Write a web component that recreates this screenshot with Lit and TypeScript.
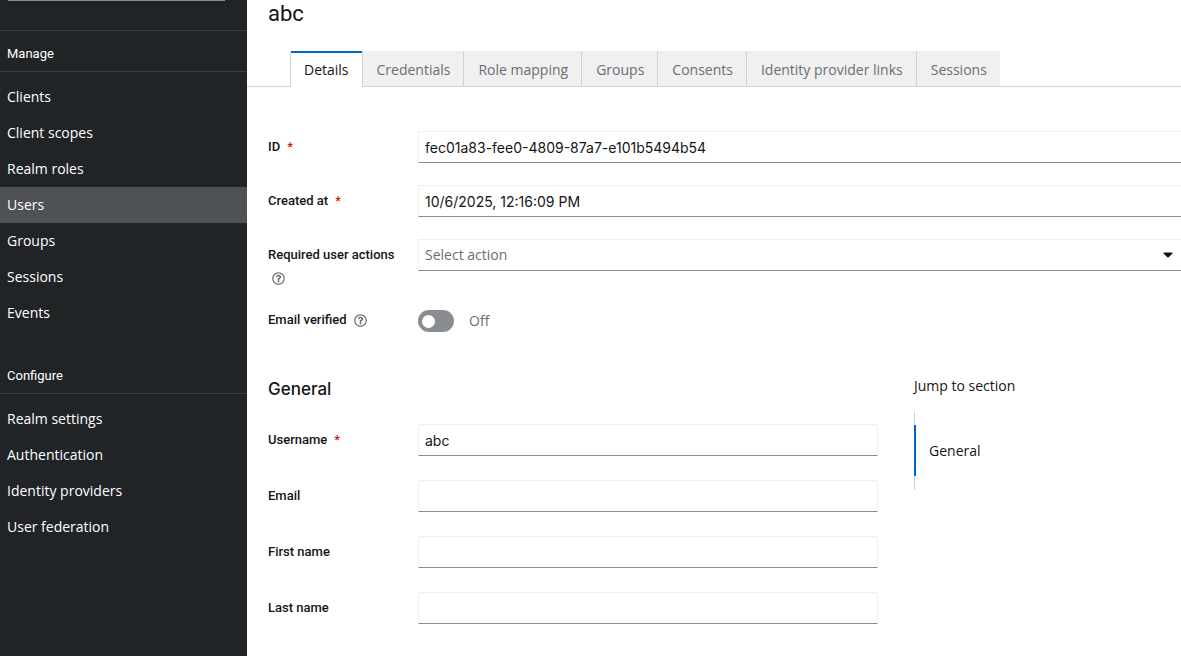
import { LitElement, html, css, nothing } from "lit";
import { customElement } from "lit/decorators.js";
import { classMap } from "lit/directives/class-map.js";

const MANAGE = ["Clients", "Client scopes", "Realm roles", "Users", "Groups", "Sessions", "Events"];
const CONFIGURE = ["Realm settings", "Authentication", "Identity providers", "User federation"];
const TABS = ["Details", "Credentials", "Role mapping", "Groups", "Consents", "Identity provider links", "Sessions"];

const helpIcon = html`<svg viewBox="0 0 512 512" width="13" height="13" aria-hidden="true">
  <path fill="currentColor" d="M256 8C119 8 8 119.100 8 256c0 137 111 248 248 248s248-111 248-248C504 119.100 393 8 256 8zm0 448c-110.500 0-200-89.400-200-200 0-110.500 89.500-200 200-200 110.500 0 200 89.500 200 200 0 110.500-89.400 200-200 200zm107.200-255.200c0 67.100-72.400 68.100-72.400 92.900V300c0 6.600-5.400 12-12 12h-45.600c-6.600 0-12-5.400-12-12v-8.700c0-35.700 27.100-50 47.600-61.500 17.600-9.800 28.300-16.500 28.300-29.600 0-17.200-22-28.700-39.800-28.700-23.200 0-33.900 11-49 30-4.100 5.100-11.500 6.100-16.700 2.100l-27.800-21.100c-5.100-3.900-6.300-11.100-2.600-16.400C184.800 131.500 214.900 112 261.800 112c49.100 0 101.500 38.300 101.500 88.800zM298 368c0 23.200-18.800 42-42 42s-42-18.800-42-42 18.800-42 42-42 42 18.800 42 42z"/>
</svg>`;

@customElement("side-nav")
class SideNav extends LitElement {
  static styles = css`
    :host { display: block; background: #212427; color: #fff; font: 14px/20px "Open Sans", sans-serif; }
    .realm { height: 30px; padding: 0 22px 0 8px; border-bottom: 1px solid #3c3f42; }
    .realm-edge { height: 1px; background: #8a8d90; }
    section { margin-bottom: 22px; }
    h2 {
      margin: 0; padding: 13px 7px 7px; border-bottom: 1px solid #3c3f42;
      font: 400 13px/20px Roboto, sans-serif;
    }
    ul { list-style: none; margin: 0; padding: 7px 0 0; }
    a { display: block; padding: 8px 7px; color: inherit; text-decoration: none; }
    .current { background: #4f5255; }
  `;

  private group(title: string, items: string[]) {
    return html`<section>
      <h2>${title}</h2>
      <ul>${items.map((item) => html`<li>
        <a href="#" class=${classMap({ current: item === "Users" })}>${item}</a>
      </li>`)}</ul>
    </section>`;
  }

  render() {
    return html`<nav>
      <div class="realm"><div class="realm-edge"></div></div>
      ${this.group("Manage", MANAGE)}
      ${this.group("Configure", CONFIGURE)}
    </nav>`;
  }
}

@customElement("app-root")
class AppRoot extends LitElement {
  static styles = css`
    * { box-sizing: border-box; }
    :host {
      display: grid; grid-template-columns: 247px minmax(0, 1fr); min-height: 100vh;
      background: #fff; color: #151515; font: 14px/20px "Open Sans", sans-serif;
    }
    h1 { margin: 0; padding: 1px 21px 0; font: 400 22px/26px Roboto, sans-serif; }
    .tabs { display: flex; margin-top: 24px; padding-left: 43px; border-bottom: 1px solid #d2d2d2; }
    .tab {
      height: 35px; padding: 3px 13px 0 14px; border: 0; border-right: 1px solid #d2d2d2;
      background: #f0f0f0; color: #6a6e73; font: inherit; white-space: nowrap;
    }
    .tab:last-child { border-right: 0; }
    .tab.active {
      height: 36px; margin-bottom: -1px; padding: 2px 13px 0; background: #fff; color: #151515;
      border-left: 1px solid #d2d2d2; box-shadow: inset 0 2px #06c;
    }
    .fields { display: grid; gap: 22px; padding: 44px 0 0 21px; }
    .row { display: grid; grid-template-columns: 150px minmax(0, 1fr); align-items: start; }
    .label {
      display: flex; flex-wrap: wrap; align-items: center; gap: 3px; padding: 6px 0 0;
      font: 500 13px/20px Roboto, sans-serif;
    }
    .star { margin-left: 7px; color: #c9190b; }
    .help {
      display: flex; align-items: center; height: 20px; padding: 0 4px; border: 0;
      background: none; color: #6a6e73;
    }
    .box {
      display: block; width: 100%; height: 32px; margin: 0; padding: 0 6px; border: 1px solid #f0f0f0;
      border-bottom-color: #8a8d90; border-radius: 0; background: #fff; color: #151515;
      font: 14px/20px Inter, sans-serif; outline: 0; appearance: none;
    }
    .fields .box { border-right: 0; }
    .picker { display: grid; align-items: center; }
    .picker > * { grid-area: 1 / 1; }
    .picker .box { color: #6a6e73; font-family: "Open Sans", sans-serif; }
    .caret { justify-self: end; margin-right: 8px; pointer-events: none; }
    .switch-row .label { padding-top: 0; }
    .switch { display: flex; align-items: center; gap: 15px; color: #6a6e73; }
    .toggle {
      display: flex; align-items: center; width: 36px; height: 22px; margin: 0; padding: 0 4px;
      border-radius: 11px; background: #8a8d90; appearance: none;
    }
    .toggle::before { content: ""; width: 13px; height: 13px; border-radius: 50%; background: #fff; }
    .toggle:checked { justify-content: flex-end; background: #06c; }
    .lower {
      display: grid; grid-template-columns: minmax(0, 610px) minmax(0, 1fr); gap: 36px;
      padding: 44px 21px 32px;
    }
    h2 { margin: 0 0 22px; font: 500 17px/26px Inter, sans-serif; }
    .stack { display: grid; gap: 24px; }
    .jump-title { line-height: 20px; }
    .jump ul { list-style: none; margin: 15px 0 0; padding: 14px 0; border-left: 1px solid #d2d2d2; }
    .jump a {
      display: block; margin-left: -1px; padding: 16px 13px 15px; border-left: 2px solid #06c;
      color: inherit; text-decoration: none;
    }
  `;

  private label(id: string, text: string, required = false, help = false) {
    return html`<div class="label">
      <label for=${id}>${text}${required ? html`<span class="star">*</span>` : nothing}</label>
      ${help ? html`<button class="help" type="button" aria-label="Help">${helpIcon}</button>` : nothing}
    </div>`;
  }

  private textRow(id: string, text: string, value = "", required = false) {
    return html`<div class="row">
      ${this.label(id, text, required)}
      <input class="box" id=${id} type="text" .value=${value}>
    </div>`;
  }

  render() {
    return html`
      <side-nav></side-nav>
      <main>
        <h1>abc</h1>
        <div class="tabs" role="tablist">
          ${TABS.map((tab, i) => html`<button type="button" role="tab"
            class=${classMap({ tab: true, active: i === 0 })}>${tab}</button>`)}
        </div>
        <form>
          <div class="fields">
            ${this.textRow("id", "ID", "fec01a83-fee0-4809-87a7-e101b5494b54", true)}
            ${this.textRow("created", "Created at", "10/6/2025, 12:16:09 PM", true)}
            <div class="row">
              ${this.label("actions", "Required user actions", false, true)}
              <div class="picker">
                <select class="box" id="actions"><option>Select action</option></select>
                <svg class="caret" width="10" height="6" viewBox="0 0 10 6" aria-hidden="true">
                  <path fill="#151515" d="M1 .5h8q1 .2.400 1L5.700 5.200q-.7.600-1.400 0L.6 1.500Q0 .7 1 .5z"/>
                </svg>
              </div>
            </div>
            <div class="row switch-row">
              ${this.label("verified", "Email verified", false, true)}
              <div class="switch">
                <input class="toggle" id="verified" type="checkbox" role="switch"><span>Off</span>
              </div>
            </div>
          </div>
          <div class="lower">
            <section>
              <h2>General</h2>
              <div class="stack">
                ${this.textRow("username", "Username", "abc", true)}
                ${this.textRow("email", "Email")}
                ${this.textRow("first", "First name")}
                ${this.textRow("last", "Last name")}
              </div>
            </section>
            <nav class="jump" aria-label="Jump to section">
              <div class="jump-title">Jump to section</div>
              <ul><li><a href="#">General</a></li></ul>
            </nav>
          </div>
        </form>
      </main>`;
  }
}
